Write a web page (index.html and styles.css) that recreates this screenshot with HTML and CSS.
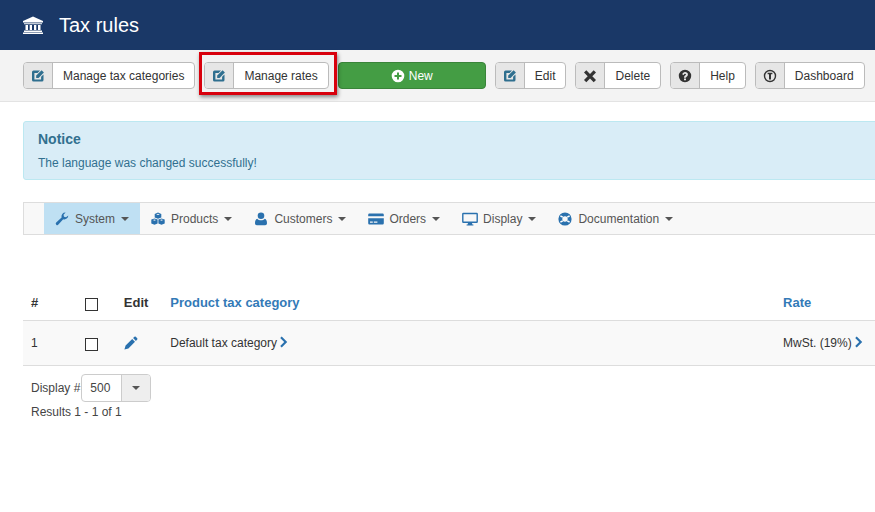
FILE: index.html

```html
<!DOCTYPE html>
<html lang="en">
<head>
  <meta charset="UTF-8" />
  <title>Tax rules</title>
  <link rel="stylesheet" href="styles.css">
</head>
<body>
  <svg class="sprites" width="0" height="0">
    <symbol id="i-edit" viewBox="0 0 14 14">
      <path d="M2.5 1.5H9L6.6 3.9H3.4V10.6H10.1V7.8L12.5 5.4V11A1.6 1.6 0 0 1 10.9 12.6H2.6A1.6 1.6 0 0 1 1 11V3A1.6 1.6 0 0 1 2.5 1.5Z"/>
      <path d="M10.6 1.3L12.9 3.6L7.6 8.9H5.2V6.6Z"/>
    </symbol>
    <symbol id="i-wrench" viewBox="0 0 14 14">
      <path d="M13.3 3.4A3.9 3.9 0 0 1 8.2 7.2L3.4 12.6A1.5 1.5 0 0 1 1.2 10.5L6.6 5.6A3.9 3.9 0 0 1 10.6.6L8.5 2.8 9 4.8 11 5.3Z"/>
    </symbol>
    <symbol id="i-cubes" viewBox="0 0 14 14">
      <path d="M7 .6L10.3 1.9V5.4L7 6.7 3.7 5.4V1.9ZM5.2 2.4L7 3.1 8.8 2.4 7 1.7Z"/>
      <path d="M3.5 6.4L6.6 7.6V11.4L3.5 12.8.3 11.4V7.6ZM1.9 8.1L3.5 8.8 5 8.1 3.5 7.5Z"/>
      <path d="M10.5 6.4L13.7 7.6V11.4L10.5 12.8 7.4 11.4V7.6ZM9 8.1L10.5 8.8 12.1 8.1 10.5 7.5Z"/>
    </symbol>
    <symbol id="i-user" viewBox="0 0 14 14">
      <circle cx="7" cy="3.8" r="3.3"/>
      <path d="M3.2 6.8C4.2 7.8 5.5 8.3 7 8.3S9.800 7.800 10.800 6.800C12.200 7.200 13 8.800 13 11.200 13 12.500 12.200 13.200 11.200 13.200H2.800C1.800 13.200 1 12.500 1 11.200 1 8.800 1.800 7.200 3.200 6.800Z"/>
    </symbol>
    <symbol id="i-card" viewBox="0 0 16 14">
      <path d="M1.400 1.500H14.600A1.200 1.200 0 0 1 15.800 2.700V4.200H.2V2.700A1.200 1.200 0 0 1 1.400 1.500Z"/>
      <path d="M.2 6.300H15.800V11.300A1.200 1.200 0 0 1 14.600 12.500H1.400A1.200 1.200 0 0 1 .2 11.300ZM2 9.600V10.800H4.800V9.600ZM5.800 9.600V10.800H9.400V9.600Z" fill-rule="evenodd"/>
    </symbol>
    <symbol id="i-desktop" viewBox="0 0 16 14">
      <path d="M1.400.8H14.600A1.300 1.300 0 0 1 15.900 2.100V9.700A1.300 1.300 0 0 1 14.600 11H10L10.400 12.500H11.400V13.400H4.600V12.500H5.600L6 11H1.400A1.300 1.300 0 0 1 .1 9.700V2.100A1.300 1.300 0 0 1 1.400.8ZM1.500 2.200V9.600H14.500V2.200Z" fill-rule="evenodd"/>
    </symbol>
    <symbol id="i-ring" viewBox="0 0 14 14">
      <path d="M7 .4A6.600 6.600 0 1 1 7 13.600 6.600 6.600 0 0 1 7 .4ZM7 4.300A2.700 2.700 0 1 0 7 9.700 2.700 2.700 0 0 0 7 4.300Z" fill-rule="evenodd"/>
      <path d="M2.400 3.800L4.700 5.200M11.600 3.800L9.300 5.200M2.400 10.200L4.700 8.800M11.600 10.200L9.300 8.800" stroke="#fff" stroke-width="1.500" transform="rotate(0 7 7)"/>
    </symbol>
    <symbol id="i-pencil" viewBox="0 0 14 14">
      <path d="M10.400.8A1 1 0 0 1 11.800.8L13.200 2.200A1 1 0 0 1 13.200 3.600L11.900 4.900 9.100 2.100ZM8.200 3L11 5.800 4.400 12.400.4 13.600 1.600 9.600Z"/>
    </symbol>
    <symbol id="i-chevron" viewBox="0 0 8 12">
      <path d="M1.700.6L7.200 6 1.700 11.400 .2 9.900 4.200 6 .2 2.100Z"/>
    </symbol>
  </svg>

  <header class="page-head">
    <svg class="bank-icon" viewBox="0 0 20 20" fill="currentColor">
      <path d="M10 1.500L20 6V7.500H0V6Z"/>
      <path d="M1 8.300H19V9.300H1ZM2.500 10H5V15H2.500ZM6.700 10H9V15H6.700ZM11 10H13.300V15H11ZM15 10H17.500V15H15ZM1 15.600H19V17H1ZM0 17.500H20V19H0Z"/>
    </svg>
    <h1>Tax rules</h1>
  </header>

  <div class="toolbar">
    <a class="tool"><span class="tool-icon"><svg class="teal"><use href="#i-edit"/></svg></span><span class="tool-text">Manage tax categories</span></a>
    <a class="tool"><span class="tool-icon"><svg class="teal"><use href="#i-edit"/></svg></span><span class="tool-text">Manage rates</span></a>
    <a class="tool-new">
      <svg viewBox="0 0 14 14"><path fill="#fff" fill-rule="evenodd" d="M7 .7A6.300 6.300 0 1 1 7 13.300 6.300 6.300 0 0 1 7 .7ZM6 3.500V6H3.500V8H6V10.500H8V8H10.500V6H8V3.500Z"/></svg>
      New
    </a>
    <a class="tool"><span class="tool-icon"><svg class="teal"><use href="#i-edit"/></svg></span><span class="tool-text">Edit</span></a>
    <a class="tool"><span class="tool-icon"><svg viewBox="0 0 14 14"><path fill="#333" d="M3.300 1.200L7 4.900 10.700 1.200 13 3.500 9.300 7.200 13 10.900 10.700 13.200 7 9.500 3.300 13.200 1 10.900 4.700 7.200 1 3.500Z"/></svg></span><span class="tool-text">Delete</span></a>
    <a class="tool"><span class="tool-icon"><svg viewBox="0 0 14 14"><path fill="#333" fill-rule="evenodd" d="M7 .8A6.200 6.200 0 1 1 7 13.200 6.200 6.200 0 0 1 7 .8ZM6 9.400V11.200H8V9.400ZM4.300 5.400L5.800 5.900C6 5.200 6.400 4.800 7 4.800 7.600 4.800 8 5.100 8 5.500 8 6.400 6 6.600 6 8.300V8.700H8C8 7.600 9.900 7.300 9.900 5.400 9.900 4 8.600 3.100 7.100 3.100 5.700 3.100 4.700 4 4.300 5.400Z"/></svg></span><span class="tool-text">Help</span></a>
    <a class="tool"><span class="tool-icon"><svg viewBox="0 0 14 14"><path fill="#333" fill-rule="evenodd" d="M7 .8A6.200 6.200 0 1 1 7 13.200 6.200 6.200 0 0 1 7 .8ZM7 2.200A4.800 4.800 0 1 0 7 11.800 4.800 4.800 0 0 0 7 2.200ZM4.600 3.800H9.400V5.300H8V10.500H6V5.300H4.600Z"/></svg></span><span class="tool-text">Dashboard</span></a>
    <div class="callout"></div>
  </div>

  <main class="content">
    <div class="notice">
      <h4>Notice</h4>
      <p>The language was changed successfully!</p>
    </div>

    <nav class="menu">
      <a class="menu-item active"><svg class="mi"><use href="#i-wrench"/></svg>System<i class="caret"></i></a>
      <a class="menu-item"><svg class="mi"><use href="#i-cubes"/></svg>Products<i class="caret"></i></a>
      <a class="menu-item"><svg class="mi"><use href="#i-user"/></svg>Customers<i class="caret"></i></a>
      <a class="menu-item"><svg class="mi wide"><use href="#i-card"/></svg>Orders<i class="caret"></i></a>
      <a class="menu-item"><svg class="mi wide"><use href="#i-desktop"/></svg>Display<i class="caret"></i></a>
      <a class="menu-item"><svg class="mi"><use href="#i-ring"/></svg>Documentation<i class="caret"></i></a>
    </nav>

    <table class="rules">
      <thead>
        <tr>
          <th class="c-num">#</th>
          <th class="c-check"><span class="checkbox"></span></th>
          <th class="c-edit">Edit</th>
          <th class="c-name"><a>Product tax category</a></th>
          <th class="c-rate"><a>Rate</a></th>
        </tr>
      </thead>
      <tbody>
        <tr>
          <td>1</td>
          <td class="c-check"><span class="checkbox"></span></td>
          <td><svg class="pencil"><use href="#i-pencil"/></svg></td>
          <td>Default tax category <svg class="chev"><use href="#i-chevron"/></svg></td>
          <td>MwSt. (19%) <svg class="chev"><use href="#i-chevron"/></svg></td>
        </tr>
      </tbody>
    </table>

    <div class="pager">
      <div class="display">
        <span>Display #</span>
        <span class="select"><span class="select-value">500</span><span class="select-btn"><i class="caret"></i></span></span>
      </div>
      <div class="results">Results 1 - 1 of 1</div>
    </div>
  </main>
</body>
</html>
```

FILE: styles.css

```css
html, body {
  margin: 0;
  height: 100%;
  overflow: hidden;
}
body {
  background: #fff;
  color: #333;
  font-family: "Liberation Sans", Arial, sans-serif;
  font-size: 12px;
  width: 875px;
  position: relative;
}
.sprites {
  position: absolute;
}
.page-head {
  display: flex;
  align-items: center;
  height: 50px;
  padding-left: 23px;
  background: #1a3867;
  color: #fff;
}
.bank-icon {
  width: 20px;
  height: 20px;
  margin-right: 16px;
}
.page-head h1 {
  margin: 0;
  font-size: 20px;
  font-weight: normal;
}
.toolbar {
  position: relative;
  display: flex;
  align-items: center;
  gap: 9px;
  height: 51px;
  padding: 0 7px 0 23px;
  background: #f3f3f3;
  border-bottom: 1px solid #e3e3e3;
  white-space: nowrap;
}
.tool {
  display: flex;
  height: 27px;
  border: 1px solid #bbb;
  border-radius: 4px;
  background: #fff;
  color: #333;
  box-sizing: border-box;
  overflow: hidden;
}
.tool-icon {
  display: flex;
  align-items: center;
  justify-content: center;
  width: 28px;
  background: #e6e6e6;
  border-right: 1px solid #bbb;
}
.tool-icon svg {
  width: 14px;
  height: 14px;
}
.teal {
  fill: #2f6f8f;
}
.tool-text {
  display: flex;
  align-items: center;
  padding: 0 10px;
}
.tool-new {
  display: flex;
  align-items: center;
  justify-content: center;
  gap: 4px;
  width: 148px;
  height: 27px;
  border: 1px solid #398439;
  border-radius: 4px;
  background: #449d44;
  color: #fff;
  box-sizing: border-box;
}
.tool-new svg {
  width: 14px;
  height: 14px;
}
.callout {
  position: absolute;
  left: 199px;
  top: 2px;
  width: 132px;
  height: 37px;
  border: 3px solid #d8000c;
  box-shadow: 1px 2px 4px rgba(0, 0, 0, 0.45);
}
.content {
  padding: 19px 0 0 23px;
}
.notice {
  width: 900px;
  height: 59px;
  padding: 9px 14px;
  border: 1px solid #bce8f1;
  border-radius: 3px;
  background: #d9edf7;
  color: #31708f;
  box-sizing: border-box;
}
.notice h4 {
  margin: 0 0 9px;
  font-size: 14px;
  line-height: 16px;
}
.notice p {
  margin: 0;
  line-height: 15px;
}
.menu {
  display: flex;
  width: 900px;
  height: 33px;
  margin-top: 22px;
  padding-left: 20px;
  border: 1px solid #ddd;
  border-right: 0;
  background: #f8f8f8;
  box-sizing: border-box;
}
.menu-item {
  display: flex;
  align-items: center;
  padding: 0 11px;
  color: #555;
}
.menu-item.active {
  background: #bfe0f3;
}
.mi {
  width: 14px;
  height: 14px;
  margin-right: 6px;
  fill: #2a71ae;
}
.mi.wide {
  width: 16px;
  margin-right: 5px;
}
.caret {
  display: inline-block;
  width: 0;
  height: 0;
  margin-left: 6px;
  border-top: 4px solid #555;
  border-left: 4px solid transparent;
  border-right: 4px solid transparent;
}
.rules {
  width: 852px;
  margin-top: 50px;
  border-collapse: collapse;
  table-layout: fixed;
}
.rules th {
  height: 35px;
  padding: 0 8px;
  text-align: left;
  font-size: 13px;
  border-bottom: 1px solid #ddd;
}
.rules th a {
  color: #337ab7;
}
.rules td {
  height: 44px;
  padding: 0 8px;
  background: #f9f9f9;
  border-bottom: 1px solid #ddd;
}
.c-num { width: 30px; }
.c-check { width: 30px; }
.c-edit { width: 30px; }
.c-name { width: 591px; }
.c-rate { width: 83px; }
.checkbox {
  display: block;
  width: 11px;
  height: 11px;
  margin: 3px 0 0 8px;
  border: 1px solid #333;
  background: #fff;
}
.pencil {
  width: 14px;
  height: 14px;
  fill: #2a71ae;
  vertical-align: middle;
}
.chev {
  width: 8px;
  height: 12px;
  fill: #2a71ae;
  vertical-align: -1px;
}
.pager {
  padding: 8px 0 0 8px;
  color: #444;
}
.display {
  display: flex;
  align-items: center;
}
.select {
  display: flex;
  width: 70px;
  height: 28px;
  border: 1px solid #ccc;
  border-radius: 4px;
  box-sizing: border-box;
  overflow: hidden;
  margin-left: 1px;
}
.select-value {
  display: flex;
  align-items: center;
  flex: 1;
  padding-left: 8px;
}
.select-btn {
  display: flex;
  align-items: center;
  justify-content: center;
  width: 28px;
  background: #eee;
  border-left: 1px solid #ccc;
}
.select-btn .caret {
  margin: 0;
}
.results {
  margin-top: 2px;
  line-height: 16px;
}
```
